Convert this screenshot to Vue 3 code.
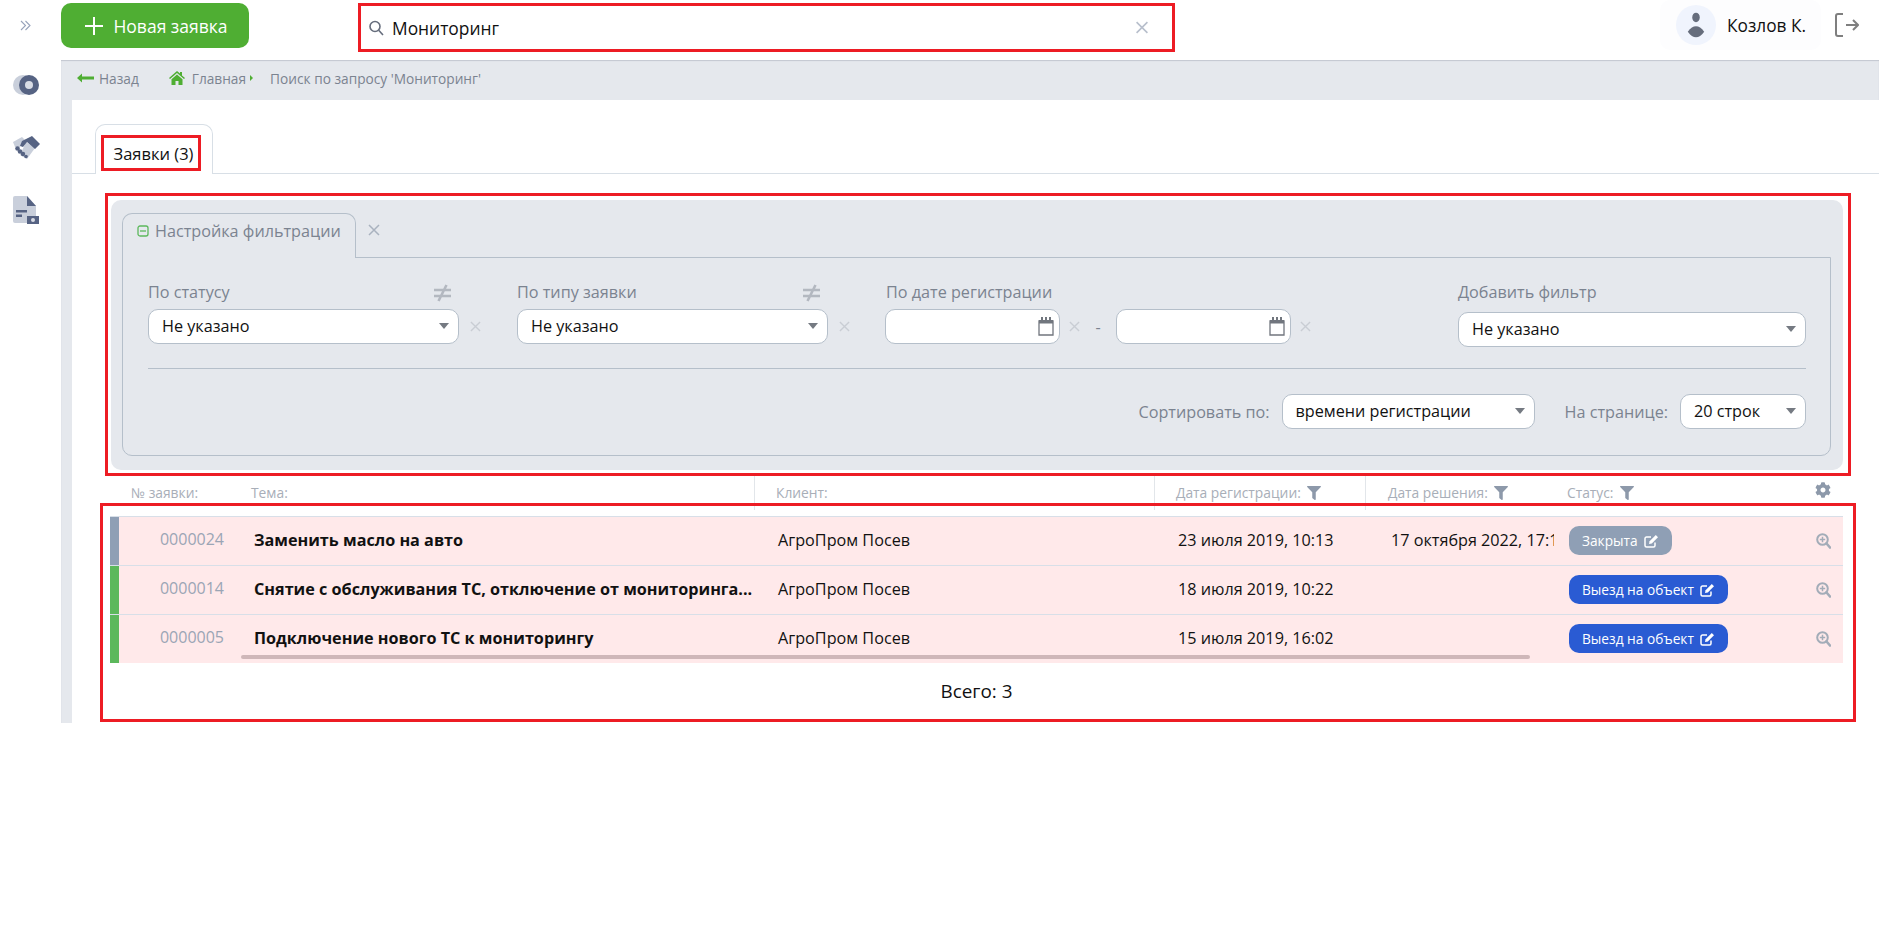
<script setup>
const rows = [
  { num: '0000024', title: 'Заменить масло на авто', client: 'АгроПром Посев', date: '23 июля 2019, 10:13', solved: '17 октября 2022, 17:12', status: 'Закрыта', closed: true },
  { num: '0000014', title: 'Снятие с обслуживания ТС, отключение от мониторинга...', client: 'АгроПром Посев', date: '18 июля 2019, 10:22', solved: '', status: 'Выезд на объект', closed: false },
  { num: '0000005', title: 'Подключение нового ТС к мониторингу', client: 'АгроПром Посев', date: '15 июля 2019, 16:02', solved: '', status: 'Выезд на объект', closed: false },
];
</script>

<template>
  <div class="page">
    <svg class="defs" width="0" height="0">
      <symbol id="i-x" viewBox="0 0 12 12">
        <path d="M1 1l10 10M11 1L1 11" fill="none" stroke="currentColor" stroke-width="1.5" />
      </symbol>
      <symbol id="i-funnel" viewBox="0 0 512 512">
        <path fill="currentColor" d="M487.976 0H24.028C2.71 0-8.047 25.866 7.058 40.971L192 225.941V432c0 7.831 3.821 15.17 10.237 19.662l80 55.98C298.02 518.69 320 507.493 320 487.98V225.941l184.947-184.97C520.021 25.896 509.338 0 487.976 0z" />
      </symbol>
      <symbol id="i-neq" viewBox="0 0 17 18">
        <path d="M0 6h17M0 12h17M12.500 1L4.500 17" fill="none" stroke="currentColor" stroke-width="2.600" />
      </symbol>
      <symbol id="i-cal" viewBox="0 0 16 19">
        <path fill="#fff" stroke="currentColor" stroke-width="1.300" d="M1 4h14v14H1z" />
        <path fill="currentColor" d="M1 3h14v3.500H1z" />
        <path fill="currentColor" d="M3 0h2v4H3zM7 0h2v4H7zM11 0h2v4h-2z" />
      </symbol>
      <symbol id="i-edit" viewBox="0 0 15 14">
        <path fill="none" stroke="currentColor" stroke-width="1.500" d="M11 8.500V11.500a1.500 1.500 0 0 1-1.500 1.500h-7A1.500 1.500 0 0 1 1 11.500v-7A1.500 1.500 0 0 1 2.500 3H7" />
        <path fill="currentColor" d="M11.800 1l2.200 2.200-6.200 6.200-2.800.6.600-2.800z" />
      </symbol>
      <symbol id="i-zoom" viewBox="0 0 15 16">
        <circle cx="6.500" cy="6.500" r="5.300" fill="none" stroke="currentColor" stroke-width="2" />
        <path d="M10.500 10.500L14 14.500" stroke="currentColor" stroke-width="2.600" stroke-linecap="round" />
        <path d="M6.500 3.800v5.400M3.800 6.500h5.400" stroke="currentColor" stroke-width="1.500" />
      </symbol>
    </svg>

    <header class="topbar">
      <div class="toggle">
        <svg width="11" height="11" viewBox="0 0 11 11" fill="none" stroke="#98a3bb" stroke-width="1.100">
          <path d="M1 1l4.500 4.500L1 10M5.500 1L10 5.500 5.500 10" />
        </svg>
      </div>
      <button class="new-btn">
        <svg width="18" height="18" viewBox="0 0 18 18" stroke="#fff" stroke-width="2">
          <path d="M9 0v18M0 9h18" />
        </svg>
        Новая заявка
      </button>
      <div class="search">
        <svg width="15" height="16" viewBox="0 0 15 16" fill="none" stroke="#666d7c" stroke-width="1.600">
          <circle cx="6" cy="6.500" r="5" />
          <path d="M9.700 10.300L14 15" />
        </svg>
        <span class="search-text">Мониторинг</span>
        <svg class="search-clear" width="14" height="13"><use href="#i-x" /></svg>
      </div>
      <div class="user">
        <div class="avatar">
          <svg width="24" height="38" viewBox="0 0 24 38" fill="#666d7c">
            <ellipse cx="12" cy="8" rx="5.500" ry="7" />
            <path d="M0 29c4-6 8-8 12-8s8 2 12 8c-4 6-8 8-12 8s-8-2-12-8z" />
          </svg>
        </div>
        <span class="user-name">Козлов К.</span>
      </div>
      <svg class="logout" width="24" height="24" viewBox="0 0 24 24" fill="none" stroke="#7f7f7f" stroke-width="2">
        <path d="M8 1H3a2 2 0 0 0-2 2v18a2 2 0 0 0 2 2h5" />
        <path d="M11 12h12M18 7l5 5-5 5" />
      </svg>
    </header>

    <div class="body">
      <aside class="sidebar">
        <svg class="side-eye" width="26" height="20" viewBox="0 0 26 20">
          <ellipse cx="10" cy="10" rx="10" ry="10" fill="#c9cfdb" />
          <circle cx="16" cy="10" r="10" fill="#566383" />
          <circle cx="16" cy="10" r="4" fill="#d8dce5" />
        </svg>
        <svg class="side-hands" width="27" height="23" viewBox="0 0 27 23">
          <path fill="#c9cfdb" d="M0 6l9-5 3 3-6 8-4-1z" />
          <path fill="#c9cfdb" d="M13 6l9 6-8 11-7-4z" />
          <path fill="#566383" d="M9 5l10-5 8 8-5 5-8-7-4 5-3-1z" />
          <g fill="#566383">
            <circle cx="4.500" cy="12.500" r="2.300" />
            <circle cx="7" cy="15.500" r="2.300" />
            <circle cx="10" cy="18" r="2.200" />
            <circle cx="13" cy="20.500" r="1.800" />
          </g>
        </svg>
        <svg class="side-doc" width="26" height="28" viewBox="0 0 26 28">
          <path fill="#c9cfdb" d="M2 0h12l9 10v15a2 2 0 0 1-2 2H2a2 2 0 0 1-2-2V2a2 2 0 0 1 2-2z" />
          <path fill="#566383" d="M14 0l9 10h-9z" />
          <path fill="#566383" d="M3 14h11v2.500H3zM3 18.500h6V21H3z" />
          <path fill="#566383" d="M14 20h12v8H14z" />
          <circle cx="20" cy="24" r="2" fill="#d8dce5" />
        </svg>
      </aside>

      <main class="main">
        <nav class="crumbs">
          <svg width="17" height="10" viewBox="0 0 17 10" fill="#4fae33">
            <path d="M0 5l5-4.500V3.500h12v3H5V9.500z" />
          </svg>
          <span class="crumb-back">Назад</span>
          <svg class="crumb-home" width="16" height="14" viewBox="0 0 16 14" fill="#4fae33">
            <path d="M8 0l3 2.600V1h2v3.400L16 7l-1 1-7-6-7 6-1-1z" />
            <path d="M2.500 8.300L8 3.600l5.500 4.700V14H9.500v-4h-3v4h-4z" />
          </svg>
          <span class="crumb-home-text">Главная</span>
          <i class="crumb-tri"></i>
          <span class="crumb-query">Поиск по запросу 'Мониторинг'</span>
        </nav>

        <div class="content">
          <div class="tabs">
            <div class="tab">
              <div class="tab-mark">Заявки (3)</div>
            </div>
          </div>

          <section class="filter-mark">
            <div class="panel">
              <div class="panel-tabs">
                <div class="panel-tab">
                  <svg width="12" height="12" viewBox="0 0 12 12" fill="none" stroke="#5cb85c" stroke-width="1.300">
                    <rect x="1" y="1" width="10" height="10" rx="2" />
                    <path d="M3 6h6" />
                  </svg>
                  Настройка фильтрации
                </div>
                <svg class="panel-close" width="12" height="12"><use href="#i-x" /></svg>
              </div>

              <div class="panel-box">
                <div class="fields">
                  <div class="field">
                    <div class="field-label">
                      По статусу
                      <svg class="neq" width="17" height="18"><use href="#i-neq" /></svg>
                    </div>
                    <div class="select field-select">Не указано</div>
                    <svg class="field-x" width="11" height="11"><use href="#i-x" /></svg>
                  </div>
                  <div class="field">
                    <div class="field-label">
                      По типу заявки
                      <svg class="neq" width="17" height="18"><use href="#i-neq" /></svg>
                    </div>
                    <div class="select field-select">Не указано</div>
                    <svg class="field-x" width="11" height="11"><use href="#i-x" /></svg>
                  </div>
                  <div class="field-date">
                    <div class="field-label">По дате регистрации</div>
                    <div class="date-row">
                      <div class="date-input">
                        <svg width="16" height="19"><use href="#i-cal" /></svg>
                      </div>
                      <svg class="field-x" width="11" height="11"><use href="#i-x" /></svg>
                      <span class="date-dash">-</span>
                      <div class="date-input">
                        <svg width="16" height="19"><use href="#i-cal" /></svg>
                      </div>
                      <svg class="field-x" width="11" height="11"><use href="#i-x" /></svg>
                    </div>
                  </div>
                  <div class="field-add">
                    <div class="field-label">Добавить фильтр</div>
                    <div class="select add-select">Не указано</div>
                  </div>
                </div>

                <div class="divider"></div>

                <div class="sort-row">
                  <span class="sort-label">Сортировать по:</span>
                  <div class="select sort-select">времени регистрации</div>
                  <span class="sort-label per-page">На странице:</span>
                  <div class="select page-select">20 строк</div>
                </div>
              </div>
            </div>
          </section>

          <div class="thead">
            <div class="th th-num">№ заявки:</div>
            <div class="th th-title">Тема:</div>
            <div class="th th-client">Клиент:</div>
            <div class="th th-date">
              Дата регистрации:
              <svg width="14" height="14"><use href="#i-funnel" /></svg>
            </div>
            <div class="th th-solved">
              Дата решения:
              <svg width="14" height="14"><use href="#i-funnel" /></svg>
            </div>
            <div class="th th-status">
              Статус:
              <svg width="14" height="14"><use href="#i-funnel" /></svg>
              <svg class="gear" width="16" height="16" viewBox="0 0 512 512">
                <path fill="currentColor" d="M487.4 315.7l-42.6-24.6c4.3-23.2 4.3-47 0-70.2l42.6-24.6c4.9-2.8 7.1-8.6 5.5-14-11.1-35.6-30-67.8-54.7-94.6-3.8-4.1-10-5.1-14.8-2.3L380.8 110c-17.9-15.4-38.5-27.3-60.8-35.1V25.800c0-5.600-3.900-10.500-9.400-11.700-36.700-8.200-74.300-7.800-109.200 0-5.500 1.200-9.400 6.100-9.400 11.700V75c-22.200 7.900-42.800 19.800-60.800 35.100L88.700 85.500c-4.900-2.800-11-1.900-14.800 2.300-24.700 26.700-43.600 58.900-54.700 94.600-1.700 5.400.6 11.200 5.500 14L67.300 221c-4.300 23.200-4.300 47 0 70.200l-42.600 24.600c-4.900 2.800-7.100 8.600-5.500 14 11.100 35.600 30 67.800 54.700 94.600 3.800 4.100 10 5.100 14.800 2.300l42.600-24.600c17.900 15.400 38.500 27.300 60.800 35.100v49.200c0 5.600 3.900 10.500 9.400 11.700 36.700 8.200 74.300 7.800 109.200 0 5.500-1.200 9.400-6.100 9.400-11.700v-49.200c22.200-7.900 42.800-19.800 60.800-35.100l42.600 24.600c4.900 2.800 11 1.900 14.800-2.300 24.700-26.700 43.600-58.900 54.700-94.600 1.500-5.500-.7-11.300-5.600-14.100zM256 336c-44.100 0-80-35.900-80-80s35.900-80 80-80 80 35.900 80 80-35.900 80-80 80z" />
              </svg>
            </div>
          </div>

          <section class="table-mark">
            <div class="rows">
              <div v-for="row in rows" :key="row.num" class="row">
                <div class="cell strip" :class="row.closed ? 'strip-closed' : 'strip-open'"></div>
                <div class="cell num">{{ row.num }}</div>
                <div class="cell title"><span class="title-text">{{ row.title }}</span></div>
                <div class="cell">{{ row.client }}</div>
                <div class="cell">{{ row.date }}</div>
                <div class="cell solved">{{ row.solved }}</div>
                <div class="cell status">
                  <span class="badge" :class="row.closed ? 'badge-closed' : 'badge-open'">
                    {{ row.status }}
                    <svg width="15" height="14"><use href="#i-edit" /></svg>
                  </span>
                  <svg class="row-zoom" width="15" height="16"><use href="#i-zoom" /></svg>
                </div>
              </div>
              <div class="scrollbar"></div>
            </div>
            <div class="total">Всего: 3</div>
          </section>
        </div>
      </main>
    </div>
  </div>
</template>

<style>
body {
  margin: 0;
  background: #fff;
}
</style>

<style scoped>
.page {
  width: 100%;
  font-family: "Open Sans", "Liberation Sans", sans-serif;
  font-size: 16.2px;
  color: #111;
}

.defs {
  position: absolute;
}

.topbar {
  height: 60px;
  display: flex;
  align-items: flex-start;
  background: #fff;
}

.toggle {
  width: 61px;
  height: 50px;
  display: flex;
  align-items: center;
  justify-content: center;
  padding-right: 10px;
  box-sizing: border-box;
}

.new-btn {
  width: 188px;
  height: 45px;
  margin-top: 3px;
  border: none;
  border-radius: 10px;
  background: #4fae33;
  color: #fff;
  font-family: inherit;
  font-size: 17.5px;
  display: flex;
  align-items: center;
  justify-content: center;
  gap: 10px;
  padding: 0 0 0 3px;
}

.search {
  width: 817px;
  height: 49px;
  margin: 3px 0 0 109px;
  box-sizing: border-box;
  border: 3px solid #ed1c24;
  display: flex;
  align-items: center;
  padding-left: 8px;
}

.search-text {
  margin-left: 8px;
  font-size: 17.4px;
}

.search-clear {
  margin-left: auto;
  margin-right: 23px;
  color: #b8bfcc;
}

.user {
  width: 161px;
  height: 50px;
  margin-left: auto;
  box-sizing: border-box;
  padding-left: 16px;
  display: flex;
  align-items: center;
  background: #fdfdfe;
  border-radius: 10px;
}

.avatar {
  width: 40px;
  height: 40px;
  border-radius: 50%;
  background: #f0f4fd;
  display: flex;
  align-items: center;
  justify-content: center;
}

.avatar svg {
  height: 26px;
}

.user-name {
  margin-left: 11px;
  font-size: 17.3px;
}

.logout {
  margin: 13px 20px 0 14px;
}

.body {
  display: flex;
}

.sidebar {
  width: 61px;
  height: 663px;
  flex-shrink: 0;
  background: #fff;
  display: flex;
  flex-direction: column;
  padding-left: 13px;
  box-sizing: border-box;
}

.side-eye {
  margin-top: 15px;
}

.side-hands {
  margin-top: 41px;
}

.side-doc {
  margin-top: 37px;
}

.main {
  flex: 1;
  height: 663px;
  background: #e5e8ed;
  padding-left: 11px;
  box-shadow: inset 0 1px 1px rgba(90, 100, 120, 0.25);
}

.crumbs {
  height: 40px;
  box-sizing: border-box;
  padding: 0 0 4px 5px;
  display: flex;
  align-items: center;
  font-size: 13.7px;
  color: #7b8390;
}

.crumb-back {
  margin-left: 5px;
}

.crumb-home {
  margin-left: 30px;
}

.crumb-home-text {
  margin-left: 7px;
}

.crumb-tri {
  width: 0;
  height: 0;
  margin-left: 4px;
  border-left: 3px solid #4fae33;
  border-top: 3px solid transparent;
  border-bottom: 3px solid transparent;
}

.crumb-query {
  margin-left: 17px;
}

.content {
  height: 623px;
  background: #fff;
}

.tabs {
  height: 74px;
  box-sizing: border-box;
  padding-left: 23px;
  display: flex;
  align-items: flex-end;
  border-bottom: 1px solid #d8dfe6;
}

.tab {
  width: 118px;
  height: 50px;
  box-sizing: border-box;
  margin-bottom: -1px;
  padding: 10px 0 0 5px;
  background: #fff;
  border: 1px solid #d8dfe6;
  border-bottom: none;
  border-radius: 10px 10px 0 0;
}

.tab-mark {
  width: 100px;
  height: 36px;
  box-sizing: border-box;
  border: 3px solid #ed1c24;
  padding-left: 5px;
  display: flex;
  align-items: center;
  justify-content: center;
  font-size: 16.5px;
  white-space: nowrap;
}

.filter-mark {
  margin: 19px 28px 0 33px;
  height: 283px;
  box-sizing: border-box;
  border: 3px solid #ed1c24;
  padding: 4px 5px 3px 3px;
}

.panel {
  height: 270px;
  box-sizing: border-box;
  padding: 13px 12px 14px 11px;
  background: #e5e8ed;
  border-radius: 10px;
}

.panel-tabs {
  height: 44px;
  display: flex;
  color: #7b8390;
}

.panel-tab {
  width: 234px;
  height: 45px;
  box-sizing: border-box;
  position: relative;
  z-index: 1;
  padding: 0 0 10px 14px;
  display: flex;
  align-items: center;
  gap: 6px;
  background: #e5e8ed;
  border: 1px solid #b5bfca;
  border-bottom: none;
  border-radius: 10px 10px 0 0;
}

.panel-close {
  margin: 11px 0 0 12px;
  color: #a9b2bf;
}

.panel-box {
  height: 199px;
  box-sizing: border-box;
  padding: 25px 24px 0 25px;
  border: 1px solid #b5bfca;
  border-radius: 0 0 10px 10px;
}

.fields {
  display: flex;
  align-items: flex-start;
}

.field {
  width: 369px;
  display: grid;
  grid-template-columns: 311px 11px;
  column-gap: 11px;
  align-items: center;
}

.field-label {
  grid-column: 1 / 3;
  width: 303px;
  height: 20px;
  box-sizing: border-box;
  margin-bottom: 6px;
  padding-bottom: 2px;
  display: flex;
  align-items: center;
  justify-content: space-between;
  color: #7b8390;
}

.neq {
  color: #b3b8c0;
  margin-top: 2px;
}

.field-x {
  flex-shrink: 0;
  color: #c9cdd4;
}

.select {
  height: 35px;
  box-sizing: border-box;
  position: relative;
  display: flex;
  align-items: center;
  background: #fff;
  border: 1px solid #b5bfca;
  border-radius: 10px;
  padding: 0 0 2px 13px;
}

.select::after {
  content: "";
  position: absolute;
  right: 9px;
  top: 13px;
  border-top: 6px solid #757a82;
  border-left: 5px solid transparent;
  border-right: 5px solid transparent;
}

.field-select {
  width: 311px;
}

.field-date {
  width: 433px;
}

.field-date .field-label {
  width: 100%;
}

.date-row {
  display: flex;
  align-items: center;
  margin-left: -1px;
}

.date-row .field-x {
  margin-left: 9px;
}

.date-input {
  width: 175px;
  height: 35px;
  box-sizing: border-box;
  display: flex;
  align-items: center;
  justify-content: flex-end;
  padding-right: 5px;
  background: #fff;
  border: 1px solid #b5bfca;
  border-radius: 10px;
  color: #71767e;
}

.date-dash {
  width: 36px;
  text-align: center;
  color: #7b8390;
}

.field-add {
  margin-left: auto;
  width: 348px;
}

.add-select {
  margin-top: 9px;
}

.divider {
  height: 1px;
  margin-top: 21px;
  background: #b5bfca;
}

.sort-row {
  margin-top: 25px;
  display: flex;
  align-items: center;
  justify-content: flex-end;
}

.sort-label {
  color: #7b8390;
  margin-right: 12px;
}

.per-page {
  margin-left: 30px;
}

.sort-select {
  width: 253px;
}

.page-select {
  width: 126px;
}

.thead {
  height: 34px;
  margin-left: 38px;
  margin-bottom: -7px;
  display: flex;
  font-size: 13.8px;
  color: #a8aeb8;
}

.th {
  box-sizing: border-box;
  padding: 0 0 1px 21px;
  display: flex;
  align-items: center;
  border-right: 1px solid #e2e6ea;
}

.th svg {
  color: #8d99aa;
  margin-left: 6px;
}

.th-num {
  width: 130px;
  border-right: none;
}

.th-title {
  width: 515px;
  padding-left: 11px;
}

.th-client {
  width: 400px;
}

.th-date {
  width: 211px;
}

.th-solved {
  width: 188px;
  padding-left: 22px;
  border-right: none;
}

.th-status {
  width: 289px;
  padding-left: 13px;
  border-right: none;
}

.th .gear {
  margin: -5px 12px 0 auto;
}

.table-mark {
  height: 219px;
  margin: 0 23px 0 28px;
  box-sizing: border-box;
  border: 3px solid #ed1c24;
  padding: 10px 0 0 7px;
  position: relative;
}

.rows {
  position: relative;
  width: 1733px;
}

.row {
  display: grid;
  grid-template-columns: 9px 120px 527px 400px 213px 175px 289px;
  height: 49px;
  box-sizing: border-box;
  border-top: 1px solid #d8dfe8;
  background: #ffe9ea;
}

.row:last-of-type {
  height: 48px;
}

.cell {
  display: flex;
  align-items: center;
  padding: 0 0 2px 12px;
  min-width: 0;
  overflow: hidden;
  white-space: nowrap;
}

.strip {
  padding: 0;
}

.strip-closed {
  background: #8f9fb5;
}

.strip-open {
  background: #5cb85c;
}

.num {
  padding: 0 15px 4px 0;
  justify-content: flex-end;
  font-size: 16px;
  color: #9ba5b5;
}

.title {
  padding: 0 12px 2px 15px;
}

.title-text {
  font-weight: 700;
}

.status {
  padding: 0 0 1px 15px;
}

.badge {
  height: 29px;
  box-sizing: border-box;
  padding: 0 13px;
  display: inline-flex;
  align-items: center;
  gap: 6px;
  border-radius: 10px;
  font-size: 13.7px;
  color: #fff;
}

.badge-closed {
  background: #8f9fb5;
}

.badge-open {
  background: #2a5bd3;
}

.row-zoom {
  margin-left: auto;
  margin-right: 12px;
  color: #a3acb8;
}

.row:last-of-type .strip,
.row:last-of-type .num,
.row:last-of-type .status {
  border-bottom: 1px solid #d8dfe8;
}

.scrollbar {
  position: absolute;
  left: 131px;
  top: 139px;
  width: 1289px;
  height: 4px;
  border-radius: 2px;
  background: #cfb7b9;
}

.total {
  margin-top: 17px;
  padding-right: 10px;
  line-height: 22px;
  text-align: center;
  font-size: 18.9px;
}
</style>
